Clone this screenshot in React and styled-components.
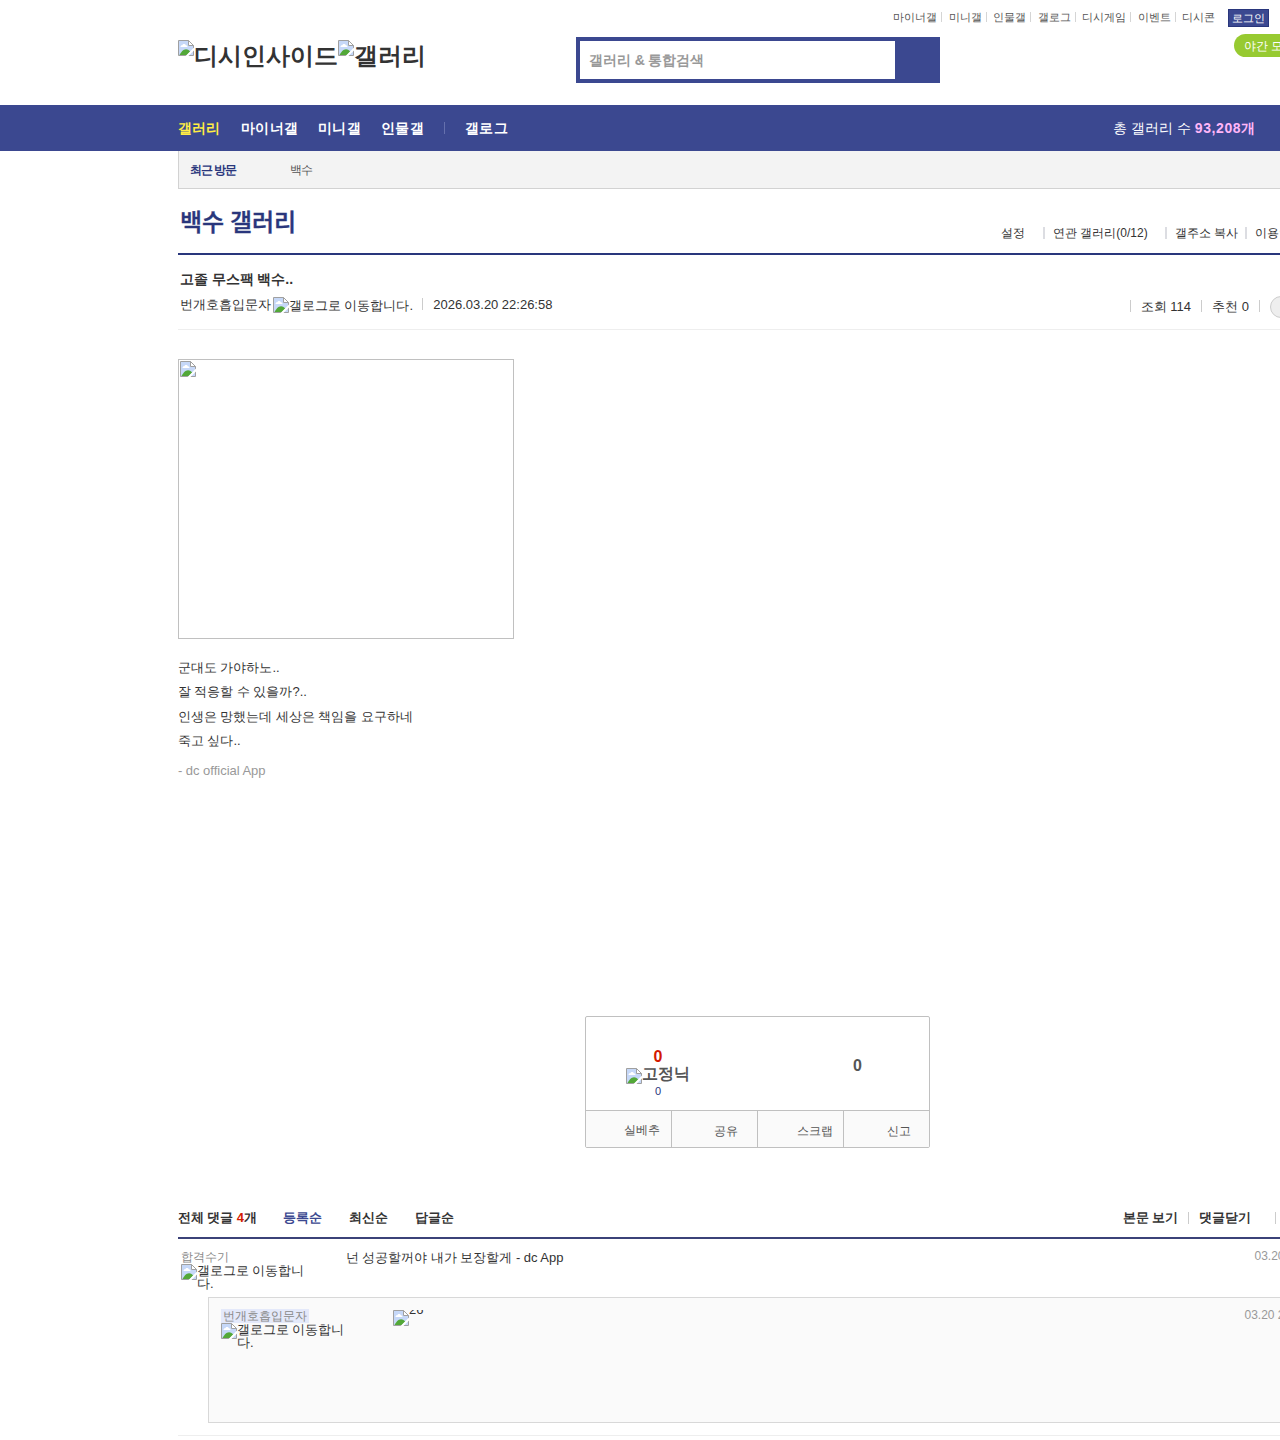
import React from 'react';
import styled, { createGlobalStyle } from 'styled-components';

const Global = createGlobalStyle`
  * { box-sizing: border-box; }
  body { margin: 0; background: #fff; color: #333; font: 13px/15px "Liberation Sans", sans-serif; word-spacing: -0.13px; }
  h1, h2, h3, p { margin: 0; font-size: inherit; }
  a { color: inherit; text-decoration: none; }
`;

const Page = styled.div`width: 1280px; height: 1440px; overflow: hidden; white-space: nowrap;`;
const Header = styled.header`display: flex; height: 105px; padding-left: 178px;`;
const Logo = styled.h1`
  display: flex; width: 398px; padding-top: 40px; font-size: 24px; line-height: 32px; font-weight: bold;
`;
const SearchBox = styled.div`
  display: flex; width: 364px; height: 46px; margin-top: 37px; padding: 4px; background: #3b4890; flex: none;
`;
const SearchField = styled.div`
  width: 315px; padding-left: 9px; background: #fff; color: #999; font-size: 14px; font-weight: bold; line-height: 38px; word-spacing: -0.25px;
`;
const Util = styled.div`display: flex; flex-direction: column; width: 340px; flex: none; margin-left: -47px;`;
const UtilLinks = styled.div`
  display: flex; align-items: center; height: 18px; margin-top: 9px; font-size: 11px; color: #555; line-height: 16px;
  a { flex: none; margin-top: -2px; }
`;
const UtilSep = styled.i`flex: none; width: 1px; height: 10px; margin: 0 6.25px 2px 4.3px; background: #d5d5d5;`;
const Login = styled.span`
  flex: none; width: 41px; height: 18px; margin-left: 12.6px; border: 1px solid #29367c; background: #3b4890; color: #fff; text-align: center; line-height: 17px;
`;
const NightMode = styled.div`
  width: 90px; height: 23px; margin: 7px 0 0 341px; padding-left: 10px; border-radius: 12px; background: #97ca31; color: #fff; font-size: 12px; line-height: 24px;
`;
const Nav = styled.nav`
  display: flex; align-items: center; height: 46px; padding-left: 178px; background: #3b4890; color: #fff; font-size: 14px;
`;
const NavLink = styled.a`
  margin-right: ${p => p.$gap ?? 19.4}px; font-weight: bold; letter-spacing: ${p => (p.$on ? 0 : p.$ls || 0.4)}px; color: ${p => (p.$on ? '#ffed44' : '#fff')};
`;
const NavSep = styled.i`width: 1px; height: 12px; margin-right: 20px; background: #6570ad;`;
const Total = styled.div`margin-left: 605px; word-spacing: 0; b { color: #ffb6f8; letter-spacing: 0.6px; }`;
const Main = styled.main`padding-left: 178px;`;
const Recent = styled.div`
  display: flex; height: 38px; width: 1160px; padding-left: 11px; border: 1px solid #d2d2d2; border-top: 0; background: #f3f3f3;
  font-size: 12px; line-height: 39px; color: #555;
  b { width: 100px; color: #29367c; letter-spacing: -1px; }
  span { letter-spacing: -1px; }
`;
const GalleryHead = styled.div`
  display: flex; width: 1160px; height: 66px; border-bottom: 2px solid #29367c; padding-left: 2px;
`;
const GalleryTitle = styled.h2`
  width: 821px; font: 500 24px/64px "Noto Sans CJK KR", sans-serif; color: #29367c; word-spacing: 0.4px; -webkit-text-stroke: 0.4px #29367c;
`;
const GalleryLinks = styled.div`display: flex; align-items: center; height: 18px; margin-top: 35px; font-size: 12px; word-spacing: 0;`;
const Bar = styled.i`
  flex: none; width: ${p => (p.$soft ? 2 : 1)}px; height: 12px; margin: 0 ${p => p.$r ?? 10}px 0 ${p => p.$l ?? 10}px; background: ${p => (p.$soft ? '#dcdde2' : '#ccc')};
`;
const PostHead = styled.div`width: 1160px; height: 75px; padding: 15px 0 0 2px; border-bottom: 1px solid #eee;`;
const PostTitle = styled.h3`font-size: 14px; line-height: 18px; word-spacing: -0.25px;`;
const Meta = styled.div`display: flex; align-items: center; height: 18px; margin-top: 7px;`;
const Stats = styled.div`display: flex; align-items: center; margin: 4px 0 0 577.3px; word-spacing: 0;`;
const Pill = styled.i`flex: none; width: 80px; height: 22px; margin-top: 1px; border: 1px solid #ccc; border-radius: 11px; background: #eee;`;
const Photo = styled.div`width: 336px; height: 280px; margin-top: 29px; padding: 1px; border: 1px solid #c0c0c0;`;
const Body = styled.div`margin-top: 17px; line-height: 24.4px;`;
const Sign = styled.p`margin-top: 5px; color: #999;`;
const VoteBox = styled.section`
  width: 345px; height: 132px; margin: 233px 0 0 407px; border: 1px solid #c0c0c0; border-radius: 2px; overflow: hidden;
`;
const Votes = styled.div`display: flex; height: 93px; font-size: 16px; font-weight: bold; color: #555;`;
const Up = styled.div`
  display: flex; flex-direction: column; align-items: center; width: 144px; padding-top: 31px; line-height: 17px;
  b { color: #d31900; } small { font-size: 11px; font-weight: normal; color: #29367c; line-height: 16px; }
`;
const Down = styled.div`margin-left: 123px; line-height: 97px;`;
const Actions = styled.div`display: flex; height: 38px; border-top: 1px solid #c0c0c0; background: #fafafa;`;
const Action = styled.a`
  flex: none; width: 86px; padding-left: ${p => p.$x}px; border-right: 1px solid #c0c0c0; font-size: 12px; line-height: ${p => p.$lh || 40}px; color: #555;
  &:last-child { border-right: 0; }
`;
const CommentHead = styled.div`
  display: flex; align-items: center; width: 1160px; height: 41px; margin-top: 50px; border-bottom: 2px solid #3b4278; font-weight: bold;
  word-spacing: -0.25px;
`;
const Count = styled.span`flex: none; width: 105px; b { color: #d31900; }`;
const Sort = styled.a`flex: none; width: 66px; color: ${p => (p.$on ? '#3b4890' : '#333')};`;
const CommentTools = styled.div`display: flex; flex: none; align-items: center; margin-left: 641.9px;`;
const Comment = styled.article`display: flex; height: 58px; padding: 11px 0 0 3px; line-height: 15px;`;
const Author = styled.div`width: ${p => p.$w}px; flex: none; line-height: 13px; word-spacing: -0.25px;`;
const Nick = styled.span`
  display: table; font-size: 12px; height: 14px; line-height: 14px; color: #888;
  ${p => p.$owner && 'background: #e4e9fa; padding: 0 2px;'}
`;
const Text = styled.p`width: ${p => p.$w}px; flex: none;`;
const Time = styled.time`margin-top: -1px; font-size: 12px; color: #999;`;
const Reply = styled.article`
  display: flex; width: 1130px; height: 126px; margin-left: 30px; padding: 11px 0 0 12px; border: 1px solid #d8d8d8; background: #fafafa;
`;
const Sticker = styled.div`display: flex; width: 851.5px; height: 16px; margin-top: 1px; overflow: hidden; line-height: 15px; span { margin-top: -8px; }`;
const Rule = styled.div`width: 1160px; height: 1px; margin-top: 12px; background: #eee;`;
const AltBox = styled.span`
  display: inline-flex; align-items: flex-start; width: ${p => (p.$w ? p.$w + 'px' : 'auto')};
  white-space: ${p => (p.$w ? 'normal' : 'nowrap')}; word-break: break-all;
  margin: ${p => p.$m || 0};
  svg { flex: none; margin-top: ${p => p.$drop || 0}px; }
  span { padding-top: ${p => p.$textDrop || 0}px; }
`;

const Broken = () => (
  <svg width="16" height="16" viewBox="0 0 16 16">
    <path d="M.5.5h10l5 5v10H.5z" fill="#c6d8f8" stroke="#a0a0a0" />
    <path d="M2.500 7c0-1.500 1-2 1.800-1.800C4.800 3.500 7.500 3.600 7.800 5.300 9 5.200 9.500 6 9.500 7z" fill="#fff" />
    <path d="M1.500 15c1.500-3 3.700-5.800 6.500-5.800 1.900 0 3.300 1 4.200 2.300L9 15z" fill="#52a838" />
    <path d="M10.500.5v5h5z" fill="#fff" stroke="#a0a0a0" />
    <path d="M16.800 8.200l-8.500 8.500" stroke="#fff" strokeWidth="2" />
  </svg>
);
const Alt = ({ children, w, m, drop, textDrop }) => (
  <AltBox $w={w} $m={m} $drop={drop} $textDrop={textDrop}><Broken /><span>{children}</span></AltBox>
);

const utils = ['마이너갤', '미니갤', '인물갤', '갤로그', '디시게임', '이벤트', '디시콘'];

export default function App() {
  return (
    <Page>
      <Global />
      <Header>
        <Logo><Alt>디시인사이드</Alt><Alt>갤러리</Alt></Logo>
        <SearchBox><SearchField>갤러리 &amp; 통합검색</SearchField></SearchBox>
        <Util>
          <UtilLinks>
            {utils.map((t, i) => (
              <React.Fragment key={t}>{i > 0 && <UtilSep />}<a>{t}</a></React.Fragment>
            ))}
            <Login>로그인</Login>
          </UtilLinks>
          <NightMode>야간 모드</NightMode>
        </Util>
      </Header>
      <Nav>
        <NavLink $on $gap={21}>갤러리</NavLink>
        <NavLink>마이너갤</NavLink>
        <NavLink>미니갤</NavLink>
        <NavLink $gap={19.5} $ls={0.5}>인물갤</NavLink>
        <NavSep />
        <NavLink $gap={0} $ls={0.5}>갤로그</NavLink>
        <Total>총 갤러리 수 <b>93,208개</b></Total>
      </Nav>
      <Main>
        <Recent><b>최근 방문</b><span>백수</span></Recent>
        <GalleryHead>
          <GalleryTitle>백수 갤러리</GalleryTitle>
          <GalleryLinks>
            <a>설정</a><Bar $soft $l={18} $r={8} />
            <a>연관 갤러리(0/12)</a><Bar $soft $l={17.5} $r={7.5} />
            <a>갤주소 복사</a><Bar $soft $l={6.5} $r={8} />
            <a>이용안내</a>
          </GalleryLinks>
        </GalleryHead>
        <PostHead>
          <PostTitle>고졸 무스팩 백수..</PostTitle>
          <Meta>
            <span>번개호흡입문자</span>
            <Alt m="2px 0 0 2px" textDrop={1}>갤로그로 이동합니다.</Alt>
            <Bar $l={9.2} />
            <span>2026.03.20 22:26:58</span>
            <Stats><Bar $l={0} /><span>조회 114</span><Bar /><span>추천 0</span><Bar /><Pill /></Stats>
          </Meta>
        </PostHead>
        <Photo><Broken /></Photo>
        <Body>
          <p>군대도 가야하노..</p>
          <p>잘 적응할 수 있을까?..</p>
          <p>인생은 망했는데 세상은 책임을 요구하네</p>
          <p>죽고 싶다..</p>
          <Sign>- dc official App</Sign>
        </Body>
        <VoteBox>
          <Votes>
            <Up><b>0</b><Alt drop={3} m="0 0 -1px">고정닉</Alt><small>0</small></Up>
            <Down>0</Down>
          </Votes>
          <Actions>
            <Action $x={38} $lh={38}>실베추</Action>
            <Action $x={42}>공유</Action>
            <Action $x={39}>스크랩</Action>
            <Action $x={43}>신고</Action>
          </Actions>
        </VoteBox>
        <CommentHead>
          <Count>전체 댓글 <b>4</b>개</Count>
          <Sort $on>등록순</Sort><Sort>최신순</Sort><Sort>답글순</Sort>
          <CommentTools><span>본문 보기</span><Bar /><span>댓글닫기</span><Bar $l={24} /><span>새로고침</span></CommentTools>
        </CommentHead>
        <Comment>
          <Author $w={165}><Nick>합격수기</Nick><Alt w={125}>갤로그로 이동합니다.</Alt></Author>
          <Text $w={908.5}>넌 성공할꺼야 내가 보장할게 - dc App</Text>
          <Time>03.20 22:29:10</Time>
        </Comment>
        <Reply>
          <Author $w={172}><Nick $owner>번개호흡입문자</Nick><Alt w={125}>갤로그로 이동합니다.</Alt></Author>
          <Sticker><Broken /><span>26</span></Sticker>
          <Time>03.20 22:30:25</Time>
        </Reply>
        <Rule />
      </Main>
    </Page>
  );
}
